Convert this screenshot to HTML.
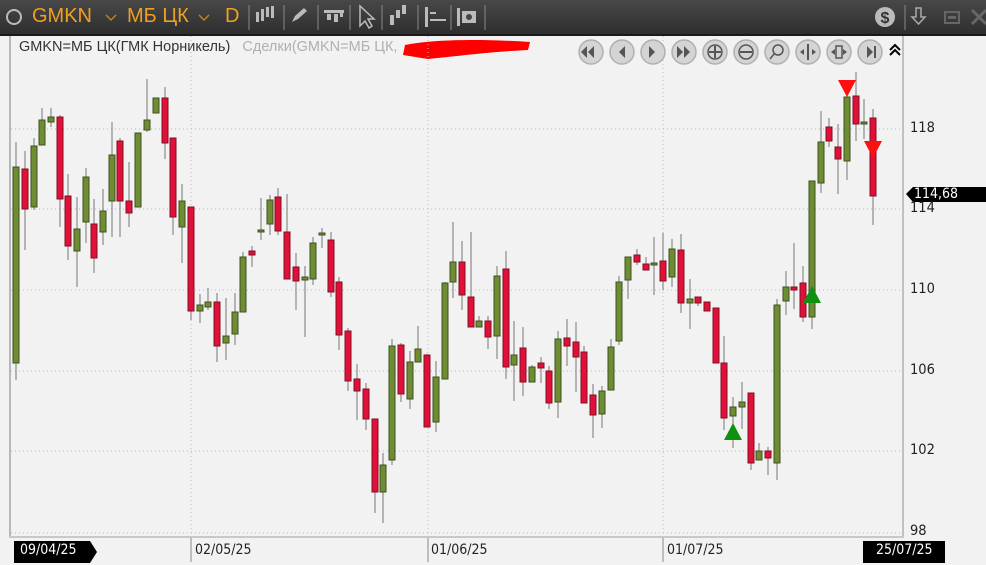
<!DOCTYPE html>
<html><head><meta charset="utf-8"><style>
body{margin:0;width:986px;height:565px;overflow:hidden;background:#f2f2f2;font-family:"Liberation Sans","DejaVu Sans",sans-serif;position:relative}
.tb{position:absolute;left:0;top:0;width:986px;height:34px;background:linear-gradient(#484848,#2e2e2e);border-bottom:2px solid #1a1a1a}
.tb span.o{position:absolute;top:5px;color:#f0a020;font-size:20px}
.leg{position:absolute;left:19px;top:39px;font-size:14.5px;color:#333;white-space:nowrap}
.leg i{font-style:normal;color:#b0b0b0}
.ax{position:absolute;font-size:14.5px;color:#222;font-family:"DejaVu Sans Condensed","Liberation Sans Narrow","Liberation Sans",sans-serif}
</style></head><body>
<div class="tb">
<svg width="986" height="34" style="position:absolute;left:0;top:0">
<circle cx="14" cy="17" r="7" fill="none" stroke="#bbb" stroke-width="2"/>
<path d="M106 15l5 5 5-5M199 15l5 5 5-5" stroke="#c08020" stroke-width="1.5" fill="none"/>
<g stroke="#888"><line x1="249" y1="5" x2="249" y2="30"/><line x1="284" y1="5" x2="284" y2="30"/><line x1="318" y1="5" x2="318" y2="30"/><line x1="350" y1="5" x2="350" y2="30"/><line x1="382" y1="5" x2="382" y2="30"/><line x1="418" y1="5" x2="418" y2="30"/><line x1="451" y1="5" x2="451" y2="30"/><line x1="485" y1="5" x2="485" y2="30"/><line x1="905" y1="5" x2="905" y2="30"/></g>
<g fill="#bbb"><rect x="256" y="12" width="3" height="10"/><rect x="261" y="9" width="3" height="12"/><rect x="266" y="7" width="3" height="10"/><rect x="271" y="6" width="3" height="12"/>
<path d="M292 22l3-6 9-8 3 3-9 8z"/><rect x="324" y="10" width="20" height="3"/><rect x="327" y="14" width="4" height="6"/><rect x="334" y="14" width="4" height="8"/><rect x="340" y="12" width="3" height="5"/>
<path d="M360 6l0 20 5-5 4 7 3-2-4-7 6 0z" fill="none" stroke="#bbb" stroke-width="1.5"/>
<rect x="390" y="15" width="4" height="10"/><rect x="396" y="10" width="4" height="8"/><rect x="402" y="5" width="4" height="9"/>
<rect x="425" y="7" width="3" height="20"/><rect x="430" y="12" width="6" height="2"/><rect x="430" y="19" width="16" height="2"/>
<rect x="457" y="8" width="3" height="18"/><rect x="462" y="11" width="14" height="12"/>
<circle cx="885" cy="17" r="10"/></g>
<circle cx="469" cy="17" r="3" fill="#444"/>
<text x="885" y="23" font-size="16" font-weight="bold" text-anchor="middle" fill="#333">$</text>
<path d="M916 8h5v9h4l-6.5 7-6.5-7h4z" fill="none" stroke="#aaa" stroke-width="1.5"/>
<rect x="945" y="12" width="14" height="11" fill="none" stroke="#666" stroke-width="2"/><rect x="948" y="16" width="8" height="3" fill="#666"/>
<path d="M972 10l14 14M986 10l-14 14" stroke="#666" stroke-width="3"/>
</svg>
<span class="o" style="left:32px">GMKN</span><span class="o" style="left:127px">МБ ЦК</span><span class="o" style="left:225px">D</span>
</div>
<div class="leg">GMKN=МБ ЦК(ГМК Норникель) <i>&nbsp; Сделки(GMKN=МБ ЦК,</i></div>
<svg id="c" width="986" height="565" style="position:absolute;left:0;top:0">
<path d="M405 45c30-6 80-6 125-3l-2 8c-40 2-60 5-100 9l-25-4z" fill="#ff0000"/>
<rect x="9" y="36" width="2" height="502" fill="#b8b8b8"/>
<rect x="902" y="36" width="2" height="502" fill="#c0c0c0"/>
<rect x="9" y="536" width="895" height="2" fill="#c8c8c8"/>
<g stroke="#bbb" stroke-dasharray="1,3">
<line x1="11" y1="129" x2="902" y2="129"/><line x1="11" y1="209" x2="902" y2="209"/><line x1="11" y1="290" x2="902" y2="290"/><line x1="11" y1="371" x2="902" y2="371"/><line x1="11" y1="451" x2="902" y2="451"/><line x1="11" y1="533" x2="902" y2="533"/>
<line x1="191" y1="36" x2="191" y2="536"/><line x1="428" y1="36" x2="428" y2="536"/><line x1="663" y1="36" x2="663" y2="536"/>
</g>
<g id="cd"></g>
<path d="M838 80h18l-9 17z M864 141h18l-9 17z" fill="#ff1010"/>
<path d="M733 423l9 17h-18z M812 286l9 17h-18z" fill="#109010"/>
<g fill="#d4d4d4" stroke="#b0b0b0" stroke-width="1.5">
<circle cx="591" cy="52" r="12"/><circle cx="622" cy="52" r="12"/><circle cx="653" cy="52" r="12"/><circle cx="684" cy="52" r="12"/><circle cx="715" cy="52" r="12"/><circle cx="746" cy="52" r="12"/><circle cx="777" cy="52" r="12"/><circle cx="808" cy="52" r="12"/><circle cx="839" cy="52" r="12"/><circle cx="870" cy="52" r="12"/></g>
<g fill="#555"><path d="M581 52l6-6v12zM588 52l6-6v12zM619 52l6-6v12zM649 46l6 6-6 6zM677 46l6 6-6 6zM684 46l6 6-6 6zM867 46l6 6-6 6z"/><rect x="874" y="46" width="2" height="12"/>
<rect x="709" y="51" width="12" height="2"/><rect x="714" y="46" width="2" height="12"/><rect x="740" y="51" width="12" height="2"/>
<rect x="807" y="44" width="2" height="16"/><path d="M800 52l4-3v6zM816 52l-4-3v6zM831 52l4-3v6zM847 52l-4-3v6z"/><rect x="836" y="46" width="6" height="12" fill="none" stroke="#555" stroke-width="1.5"/></g>
<g fill="none" stroke="#555" stroke-width="1.5"><circle cx="715" cy="52" r="7"/><circle cx="746" cy="52" r="7"/><circle cx="778" cy="50" r="5"/><path d="M774 54l-4 5"/></g>
<path d="M890 50l5-5 5 5M890 55l5-5 5 5" stroke="#000" stroke-width="2" fill="none"/>
<g fill="#000"><path d="M14 541h76l7 11-7 11h-76z"/><rect x="863" y="541" width="82" height="22"/><path d="M906 194l7-7h73v15h-73z"/></g>
<g stroke="#888"><line x1="191" y1="538" x2="191" y2="562"/><line x1="428" y1="538" x2="428" y2="562"/><line x1="663" y1="538" x2="663" y2="562"/></g>
</svg>
<div class="ax" style="left:20px;top:542px;color:#fff;font-size:14px">09/04/25</div>
<div class="ax" style="left:195px;top:542px;font-size:14px">02/05/25</div>
<div class="ax" style="left:431px;top:542px;font-size:14px">01/06/25</div>
<div class="ax" style="left:667px;top:542px;font-size:14px">01/07/25</div>
<div class="ax" style="left:876px;top:542px;color:#fff;font-size:14px">25/07/25</div>
<div class="ax" style="left:910px;top:120px">118</div>
<div class="ax" style="left:910px;top:200px">114</div>
<div class="ax" style="left:910px;top:281px">110</div>
<div class="ax" style="left:910px;top:362px">106</div>
<div class="ax" style="left:910px;top:442px">102</div>
<div class="ax" style="left:910px;top:523px">98</div>
<div class="ax" style="left:914px;top:186px;color:#fff;font-size:14px">114,68</div>
<script>
var d=[[16,142,167,363,380,1],[25,151,169,209,250,0],[34,138,146,207,210,1],[42,108,120,145,145,1],[51,108,117,122,127,1],[60,115,117,199,227,0],[68,174,196,246,260,0],[77,197,229,251,287,1],[86,168,177,222,243,1],[94,199,224,258,273,0],[103,189,211,232,245,1],[112,122,155,201,237,1],[120,138,141,201,237,0],[129,162,201,213,227,0],[138,133,133,207,207,1],[147,79,120,130,132,1],[156,98,98,113,113,1],[165,87,98,143,159,0],[173,138,138,217,235,0],[182,184,201,227,263,1],[191,207,207,311,320,0],[200,294,305,311,323,1],[208,288,302,307,310,1],[217,293,302,346,362,0],[226,298,336,343,360,1],[235,293,312,334,345,1],[243,252,257,312,312,1],[252,246,251,255,267,0],[261,198,230,232,240,1],[270,195,200,224,235,1],[278,188,197,231,235,0],[287,194,232,279,279,0],[296,253,267,281,310,0],[305,266,277,280,337,1],[313,237,243,279,285,1],[322,228,233,235,248,1],[331,232,240,292,297,0],[339,277,282,335,350,0],[348,328,331,381,391,0],[357,364,379,391,420,0],[366,383,389,419,430,0],[375,419,419,492,513,0],[383,453,465,492,523,1],[392,339,346,460,465,1],[401,343,345,394,402,0],[410,351,362,399,409,1],[418,326,349,362,362,1],[427,354,355,427,427,0],[436,361,377,422,432,1],[445,282,283,379,379,1],[453,222,262,282,298,1],[462,241,262,295,310,0],[471,232,297,327,327,0],[479,316,321,327,327,1],[488,316,321,337,349,0],[497,266,276,336,359,1],[506,251,269,367,379,0],[514,321,355,365,401,1],[523,327,348,382,396,0],[532,365,367,382,382,1],[541,357,363,368,383,0],[549,366,371,403,409,0],[558,331,339,402,418,1],[567,319,338,346,366,0],[576,322,342,357,392,0],[584,346,352,403,403,0],[593,384,395,415,438,0],[602,386,391,414,428,1],[611,339,347,390,390,1],[619,276,282,341,345,1],[628,257,257,280,299,1],[637,249,255,262,265,0],[646,257,264,270,270,0],[654,237,263,265,295,1],[663,233,261,281,290,0],[672,239,249,277,287,1],[681,234,250,303,313,0],[690,279,299,303,329,1],[698,297,297,303,306,0],[707,302,302,311,311,0],[716,308,308,363,363,0],[724,336,363,418,430,0],[733,397,407,416,448,1],[742,382,402,407,429,1],[751,393,393,463,470,0],[759,443,451,460,460,1],[768,447,451,458,475,0],[777,299,305,463,480,1],[786,271,287,301,315,1],[794,243,287,290,309,0],[803,266,283,317,322,0],[812,181,181,317,329,1],[821,111,142,183,193,1],[829,118,127,141,147,0],[838,124,147,159,194,0],[847,95,97,161,180,1],[856,72,96,124,141,0],[864,99,122,124,139,1],[873,109,118,196,225,0]];
var s='';d.forEach(function(c){var x=c[0];s+='<line x1="'+x+'" y1="'+c[1]+'" x2="'+x+'" y2="'+c[4]+'" stroke="#777"/>';var h=Math.max(c[3]-c[2],2);s+='<rect x="'+(x-3)+'" y="'+c[2]+'" width="6" height="'+h+'" fill="'+(c[5]?'#6e8c32':'#e0103a')+'" stroke="'+(c[5]?'#3e5020':'#801020')+'" stroke-width="1"/>';});
document.getElementById('cd').innerHTML=s;
</script>
</body></html>
